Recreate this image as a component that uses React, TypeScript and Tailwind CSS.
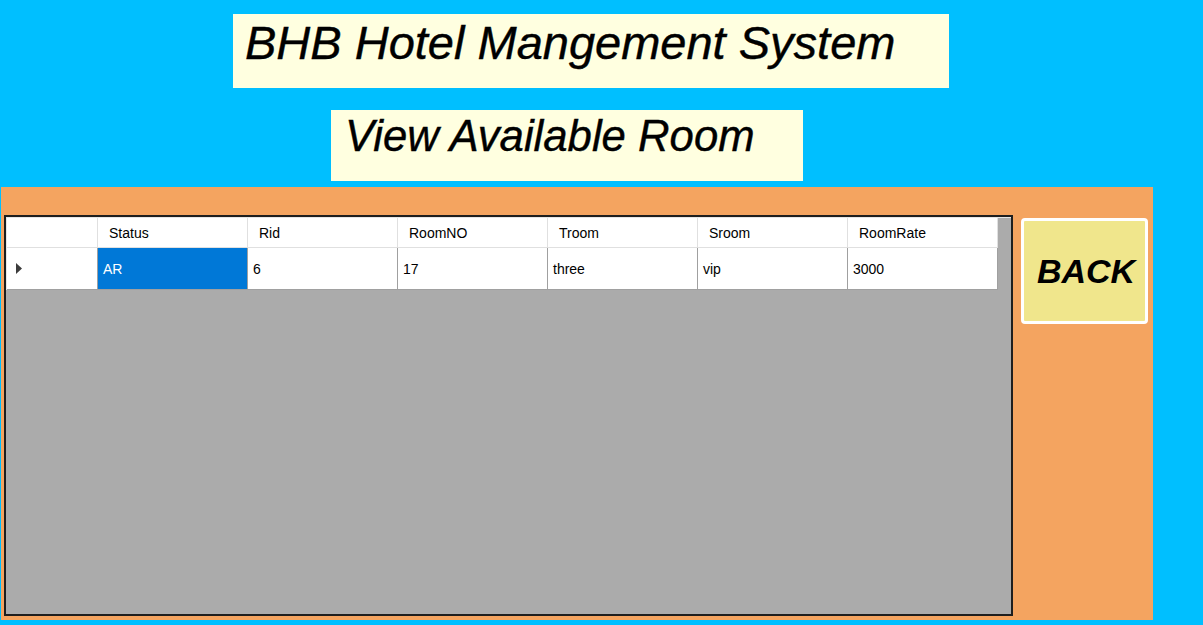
import React from "react";

const cols = ["Status", "Rid", "RoomNO", "Troom", "Sroom", "RoomRate"];
const row = ["AR", "6", "17", "three", "vip", "3000"];

export default function App() {
  return (
    <div
      className="w-[1203px] h-[625px] bg-[#00BFFF] flex flex-col overflow-hidden"
      style={{ fontFamily: '"Liberation Sans", Arial, sans-serif' }}
    >
      <div className="ml-[233px] mt-[14px] w-[716px] h-[74px] bg-[#FFFFE0] pl-[12px] pt-[5px]">
        <div className="italic text-[47px] leading-[47px] text-black [-webkit-text-stroke:0.4px_black]">
          BHB Hotel Mangement System
        </div>
      </div>
      <div className="ml-[331px] mt-[22px] w-[472px] h-[71px] bg-[#FFFFE0] pl-[14px] pt-[4px]">
        <div className="italic text-[43.7px] leading-[44px] text-black [-webkit-text-stroke:0.4px_black]">
          View Available Room
        </div>
      </div>
      <div className="ml-[1px] mt-[6px] w-[1152px] h-[433px] bg-[#F4A460] flex flex-row items-start pl-[3px] pt-[28px]">
        <div className="w-[1009px] h-[401px] border-2 border-[#1e1e1e] bg-[#ABABAB] flex flex-col">
          <div className="border-t border-l border-[#e6e6e6] bg-[#ABABAB] flex flex-col">
            <div className="flex flex-row h-[30px] text-[14px] text-black">
              <div className="w-[91px] h-full bg-white border-r border-b border-[#e0e0e0]" />
              {cols.map((c) => (
                <div
                  key={c}
                  className="w-[150px] h-full bg-white border-r border-b border-[#e0e0e0] flex items-center pl-[11px] pt-[2px]"
                >
                  {c}
                </div>
              ))}
            </div>
            <div className="flex flex-row h-[42px] text-[14px] text-black">
              <div className="w-[91px] h-full bg-white border-r border-b border-[#a0a0a0] flex items-center pl-[9px]">
                <svg width="7" height="11" viewBox="0 0 7 11">
                  <path d="M0 0 L6 5.5 L0 11 Z" fill="#3c3c3c" />
                </svg>
              </div>
              {row.map((v, i) => (
                <div
                  key={i}
                  className={
                    i === 0
                      ? "w-[150px] h-full bg-[#0078D7] text-white border-r border-b border-[#a0a0a0] flex items-center pl-[5px] pt-[2px]"
                      : "w-[150px] h-full bg-white border-r border-b border-[#a0a0a0] flex items-center pl-[5px] pt-[2px]"
                  }
                >
                  {v}
                </div>
              ))}
            </div>
          </div>
        </div>
        <div className="ml-[8px] mt-[3px] w-[127px] h-[106px] rounded-[4px] border-[3px] border-white bg-[#F0E68C] flex items-center justify-center">
          <span className="italic font-bold text-[34px] leading-[34px] text-black pl-[3px]">BACK</span>
        </div>
      </div>
    </div>
  );
}
